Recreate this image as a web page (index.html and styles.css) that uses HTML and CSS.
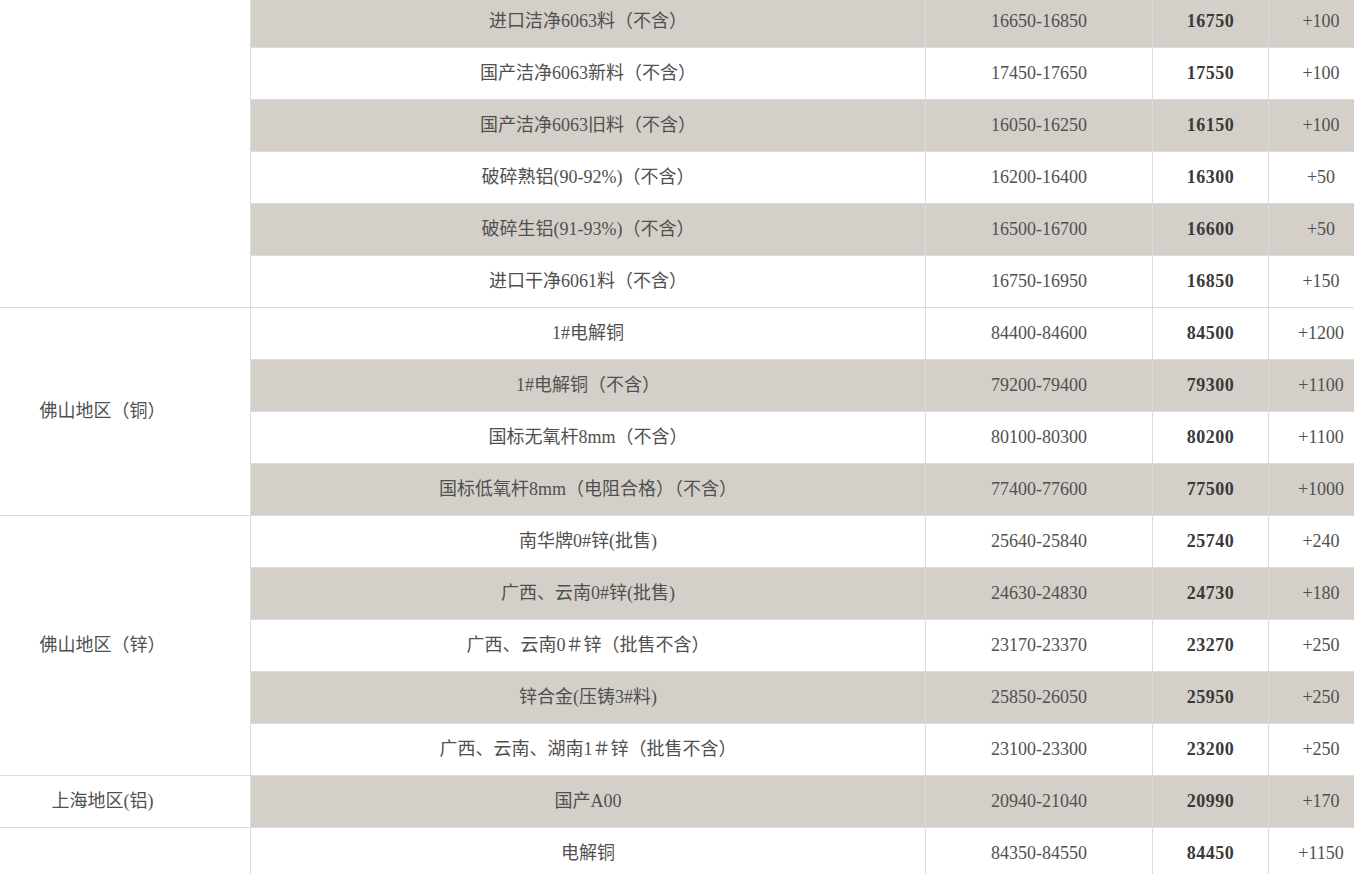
FILE: index.html
```html
<!DOCTYPE html>
<html lang="zh-CN">
<head>
<meta charset="utf-8">
<title>价格表</title>
<link rel="stylesheet" href="styles.css">
</head>
<body>
<div class="wrap">
<table class="price-table">
  <colgroup>
    <col class="c-region"><col class="c-name"><col class="c-range"><col class="c-price"><col class="c-change">
  </colgroup>
  <tbody>
    <tr class="alt"><td class="region" rowspan="6"></td><td>进口洁净6063料（不含）</td><td>16650-16850</td><td class="price">16750</td><td>+100</td></tr>
    <tr><td>国产洁净6063新料（不含）</td><td>17450-17650</td><td class="price">17550</td><td>+100</td></tr>
    <tr class="alt"><td>国产洁净6063旧料（不含）</td><td>16050-16250</td><td class="price">16150</td><td>+100</td></tr>
    <tr><td>破碎熟铝(90-92%)（不含）</td><td>16200-16400</td><td class="price">16300</td><td>+50</td></tr>
    <tr class="alt"><td>破碎生铝(91-93%)（不含）</td><td>16500-16700</td><td class="price">16600</td><td>+50</td></tr>
    <tr><td>进口干净6061料（不含）</td><td>16750-16950</td><td class="price">16850</td><td>+150</td></tr>

    <tr><td class="region" rowspan="4">佛山地区（铜）</td><td>1#电解铜</td><td>84400-84600</td><td class="price">84500</td><td>+1200</td></tr>
    <tr class="alt"><td>1#电解铜（不含）</td><td>79200-79400</td><td class="price">79300</td><td>+1100</td></tr>
    <tr><td>国标无氧杆8mm（不含）</td><td>80100-80300</td><td class="price">80200</td><td>+1100</td></tr>
    <tr class="alt"><td>国标低氧杆8mm（电阻合格）（不含）</td><td>77400-77600</td><td class="price">77500</td><td>+1000</td></tr>

    <tr><td class="region" rowspan="5">佛山地区（锌）</td><td>南华牌0#锌(批售)</td><td>25640-25840</td><td class="price">25740</td><td>+240</td></tr>
    <tr class="alt"><td>广西、云南0#锌(批售)</td><td>24630-24830</td><td class="price">24730</td><td>+180</td></tr>
    <tr><td>广西、云南0＃锌（批售不含）</td><td>23170-23370</td><td class="price">23270</td><td>+250</td></tr>
    <tr class="alt"><td>锌合金(压铸3#料)</td><td>25850-26050</td><td class="price">25950</td><td>+250</td></tr>
    <tr><td>广西、云南、湖南1＃锌（批售不含）</td><td>23100-23300</td><td class="price">23200</td><td>+250</td></tr>

    <tr class="alt"><td class="region">上海地区(铝)</td><td>国产A00</td><td>20940-21040</td><td class="price">20990</td><td>+170</td></tr>

    <tr><td class="region" rowspan="2"></td><td>电解铜</td><td>84350-84550</td><td class="price">84450</td><td>+1150</td></tr>
    <tr class="alt"><td>&nbsp;</td><td>&nbsp;</td><td class="price">&nbsp;</td><td>&nbsp;</td></tr>
  </tbody>
</table>
</div>
</body>
</html>
```

FILE: styles.css
```css
html, body {
  margin: 0;
  padding: 0;
  background: #fff;
  overflow: hidden;
}
.wrap {
  margin-top: -5px;
  margin-left: -46px;
}
.price-table {
  border-collapse: collapse;
  table-layout: fixed;
  width: 1419px;
  font-family: "Liberation Serif", "Noto Sans CJK SC", serif;
  font-size: 18px;
  line-height: 20px;
  color: #505050;
}
.c-region { width: 296px; }
.c-name { width: 675px; }
.c-range { width: 227px; }
.c-price { width: 116px; }
.c-change { width: 105px; }
.price-table td {
  border: 1px solid #dcdcdc;
  height: 49px;
  padding: 0 0 2px;
  text-align: center;
  vertical-align: middle;
  white-space: nowrap;
}
.price-table tr.alt td {
  background: #d4d0c9;
}
.price-table tr td.region {
  background: #fff;
}
.price-table td.price {
  font-weight: bold;
  color: #3a3a3a;
  letter-spacing: 0.5px;
}
```
